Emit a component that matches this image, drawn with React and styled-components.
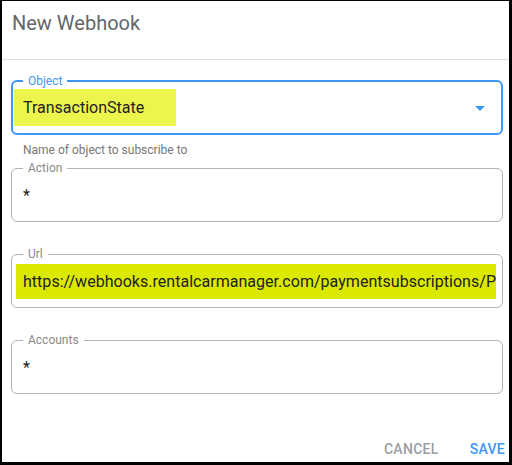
import React from "react";
import styled, { createGlobalStyle } from "styled-components";

const GlobalStyle = createGlobalStyle`
  html, body {
    margin: 0;
    padding: 0;
    background: #000;
  }
  body {
    font-family: Roboto, "Liberation Sans", sans-serif;
  }
`;

const BLUE = "#3f97f5";

const Frame = styled.div`
  width: 512px;
  height: 465px;
  box-sizing: border-box;
  border-style: solid;
  border-color: #000;
  border-width: 1px 3px 3px 2px;
  background: #fff;
  display: flex;
  flex-direction: column;
`;

const Header = styled.div`
  height: 59px;
  box-sizing: border-box;
  padding: 10px 10px 0;
  border-bottom: 1px solid #e0e0e0;
`;

const Title = styled.h2`
  margin: 0;
  font-size: 20px;
  line-height: 24px;
  font-weight: 400;
  color: #666;
`;

const Body = styled.div`
  padding: 20px 6px 0 9px;
  display: flex;
  flex-direction: column;
`;

const Box = styled.div`
  position: relative;
  height: ${(p) => (p.$focused ? 55 : 54)}px;
  box-sizing: border-box;
  border: ${(p) => (p.$focused ? `2px solid ${BLUE}` : "1px solid #b3b3b3")};
  border-radius: 6px;
  display: flex;
  align-items: center;
  padding-left: ${(p) => (p.$focused ? 1 : 2)}px;
  padding-right: ${(p) => (p.$focused ? 9 : 6)}px;
  margin-top: ${(p) => p.$top || 0}px;
`;

const Label = styled.span`
  position: absolute;
  top: -8px;
  left: ${(p) => (p.$focused ? 10 : 11)}px;
  padding: 0 5px;
  background: #fff;
  font-size: 12px;
  line-height: 14px;
  color: ${(p) => (p.$focused ? BLUE : "#8a8a8a")};
`;

const Value = styled.div`
  flex: 1;
  min-width: 0;
  overflow: hidden;
  white-space: nowrap;
  font-size: 16px;
  color: #222;
`;

const Highlight = styled.span`
  display: inline-block;
  height: ${(p) => p.$h}px;
  line-height: ${(p) => p.$h}px;
  margin-left: ${(p) => p.$offset || 0}px;
  padding: 0 ${(p) => p.$right}px 0 ${(p) => p.$left}px;
  letter-spacing: ${(p) => p.$spacing || 0}px;
  background: ${(p) => p.$color};
`;

const Plain = styled.span`
  padding-left: 9px;
`;

const Helper = styled.div`
  margin: 8px 0 0 12px;
  font-size: 12px;
  line-height: 14px;
  color: #777;
`;

const Footer = styled.div`
  margin-top: auto;
  height: 26px;
  padding-right: 4px;
  display: flex;
  justify-content: flex-end;
  align-items: center;
  gap: 31px;
`;

const Button = styled.button`
  border: none;
  background: none;
  padding: 0;
  font-family: Roboto, "Liberation Sans", sans-serif;
  font-size: 14px;
  font-weight: 500;
  letter-spacing: 0.3px;
  text-transform: uppercase;
  color: ${(p) => (p.$primary ? BLUE : "#9e9e9e")};
`;

const Arrow = () => (
  <svg width="24" height="24" viewBox="0 0 24 24">
    <path d="M7 10l5 5 5-5z" fill={BLUE} />
  </svg>
);

const Field = ({ label, focused, top, children, select }) => (
  <Box $focused={focused} $top={top}>
    <Label $focused={focused}>{label}</Label>
    <Value>{children}</Value>
    {select && <Arrow />}
  </Box>
);

export default function App() {
  return (
    <>
      <GlobalStyle />
      <Frame>
        <Header>
          <Title>New Webhook</Title>
        </Header>
        <Body>
          <Field label="Object" focused select>
            <Highlight $h={37} $left={9} $right={32} $color="#ecf54c">
              TransactionState
            </Highlight>
          </Field>
          <Helper>Name of object to subscribe to</Helper>
          <Field label="Action" top={11}>
            <Plain>*</Plain>
          </Field>
          <Field label="Url" top={32}>
            <Highlight $h={35} $offset={2} $left={7} $right={3} $spacing={0.03} $color="#dbe900">
              https://webhooks.rentalcarmanager.com/paymentsubscriptions/P
            </Highlight>
          </Field>
          <Field label="Accounts" top={32}>
            <Plain>*</Plain>
          </Field>
        </Body>
        <Footer>
          <Button>Cancel</Button>
          <Button $primary>Save</Button>
        </Footer>
      </Frame>
    </>
  );
}
